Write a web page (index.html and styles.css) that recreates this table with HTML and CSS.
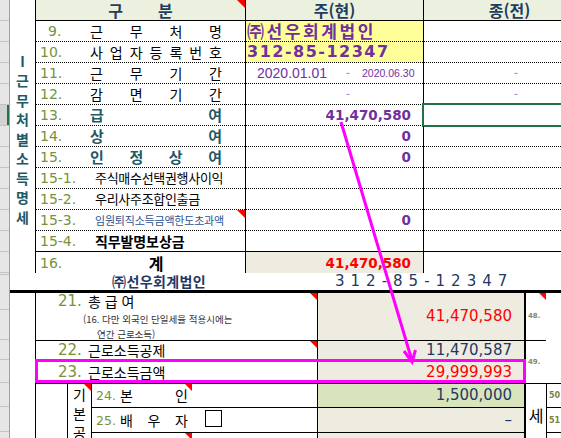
FILE: index.html
```html
<!DOCTYPE html>
<html lang="ko">
<head>
<meta charset="utf-8">
<title>근무처별소득명세</title>
<link rel="stylesheet" href="styles.css">
</head>
<body>
<div class="page">
  <div class="strip">
    <div class="sr"></div><div class="sr"></div><div class="sr"></div><div class="sr"></div><div class="sr"></div>
    <div class="sr sel"></div>
    <div class="sr"></div><div class="sr"></div><div class="sr"></div><div class="sr"></div><div class="sr"></div><div class="sr"></div><div class="sr"></div>
    <div class="sr s2"></div>
    <div class="sr s35"></div>
    <div class="sr s30"></div>
    <div class="sr s20"></div>
    <div class="sr s23"></div>
    <div class="sr s24"></div>
    <div class="sr s25"></div>
    <div class="sr s30"></div>
  </div>

  <div class="sheet">
    <div class="upper">
      <div class="title"><span>Ⅰ</span><span>근</span><span>무</span><span>처</span><span>별</span><span>소</span><span>득</span><span>명</span><span>세</span></div>

      <div class="cell hd"><span class="hsp"><span>구</span><span>분</span></span><i class="tri t8"></i></div>
      <div class="cell hd">주(현)</div>
      <div class="cell hd">종(전)</div>

      <div class="cell"><span class="n n9">9.</span><span class="lb"><span>근</span><span>무</span><span>처</span><span>명</span></span></div>
      <div class="cell yel"><span class="co">㈜선우회계법인</span></div>
      <div class="cell"></div>

      <div class="cell"><span class="n">10.</span><span class="lb"><span>사</span><span>업</span><span>자</span><span>등</span><span>록</span><span>번</span><span>호</span></span></div>
      <div class="cell yel"><span class="bn">312-85-12347</span></div>
      <div class="cell"></div>

      <div class="cell"><span class="n">11.</span><span class="lb"><span>근</span><span>무</span><span>기</span><span>간</span></span></div>
      <div class="cell"><span class="d1">2020.01.01</span><span class="tl">~</span><span class="d2">2020.06.30</span></div>
      <div class="cell"><span class="tl m90">~</span></div>

      <div class="cell"><span class="n">12.</span><span class="lb"><span>감</span><span>면</span><span>기</span><span>간</span></span></div>
      <div class="cell"><span class="tl m100">~</span></div>
      <div class="cell"><span class="tl m90">~</span></div>

      <div class="cell"><span class="n">13.</span><span class="lb t"><span>급</span><span>여</span></span></div>
      <div class="cell r"><span class="pv">41,470,580</span></div>
      <div class="cell"><i class="selbox"></i></div>

      <div class="cell"><span class="n">14.</span><span class="lb t"><span>상</span><span>여</span></span></div>
      <div class="cell r"><span class="pv">0</span></div>
      <div class="cell"></div>

      <div class="cell"><span class="n">15.</span><span class="lb t"><span>인</span><span>정</span><span>상</span><span>여</span></span></div>
      <div class="cell r"><span class="pv">0</span></div>
      <div class="cell"></div>

      <div class="cell"><span class="n w">15-1.</span><span class="l15">주식매수선택권행사이익</span></div>
      <div class="cell"></div>
      <div class="cell"></div>

      <div class="cell"><span class="n w">15-2.</span><span class="l15">우리사주조합인출금</span></div>
      <div class="cell"></div>
      <div class="cell"></div>

      <div class="cell"><span class="n w">15-3.</span><span class="l153">임원퇴직소득금액한도초과액</span><i class="tri t8"></i></div>
      <div class="cell r"><span class="pv">0</span></div>
      <div class="cell"></div>

      <div class="cell solid"><span class="n w">15-4.</span><span class="l154">직무발명보상금</span></div>
      <div class="cell solid"></div>
      <div class="cell solid"></div>

      <div class="cell last"><span class="n">16.</span><span class="lb c">계</span></div>
      <div class="cell last r beige"><span class="pv rd">41,470,580</span></div>
      <div class="cell last"></div>
    </div>

    <div class="company"><span class="cn">㈜선우회계법인</span><span class="cb">312-85-12347</span></div>

    <div class="lower">
      <div class="gap"></div>

      <div class="lc k2l r1 l21">
        <div class="l21a"><span class="n2">21.</span><span>총 급 여</span></div>
        <div class="sm sm1">(16. 다만 외국인 단일세율 적용시에는</div>
        <div class="sm sm2">연간 근로소득)</div>
        <i class="tri"></i>
      </div>
      <div class="lc k6 r1 lv rd">41,470,580</div>
      <div class="lc k7 r1 rt"><span>48.</span><i class="tri"></i></div>
      <div class="lc k8 r1 rx"></div>

      <div class="lc k2l r2 lrow"><span class="n2">22.</span><span>근로소득공제</span><i class="tri"></i></div>
      <div class="lc k6 r2 lv nv">11,470,587</div>
      <div class="lc k7 r2s rt"><span>49.</span></div>
      <div class="lc k8 r2s rx"></div>

      <div class="lc k2l r3 lrow"><span class="n2">23.</span><span>근로소득금액</span></div>
      <div class="lc k6 r3 lv rd">29,999,993</div>

      <div class="lc k2 r4s nb"></div>
      <div class="lc k3 r4s nb vt"><span>기</span><span>본</span><span>공</span><i class="tri"></i></div>
      <div class="lc k4 r4 c4"><span class="n3">24.</span><span class="lb3"><span>본</span><span>인</span></span><i class="tri"></i></div>
      <div class="lc k5 r4 c5"></div>
      <div class="lc k6 r4 lv nv gr">1,500,000</div>
      <div class="lc k7 r4s se">세</div>
      <div class="lc k8 r4 c8">50</div>

      <div class="lc k4 r5 c4"><span class="n3">25.</span><span class="lb3"><span>배</span><span>우</span><span>자</span></span></div>
      <div class="lc k5 r5 c5"><span class="chk"></span></div>
      <div class="lc k6 r5 lv nv">–</div>
      <div class="lc k8 r5 c8">51</div>

      <div class="lc k4 r6 c4"><i class="tri"></i></div>
      <div class="lc k5 r6 c5"></div>
      <div class="lc k6 r6 lv"></div>
      <div class="lc k8 r6 c8"></div>
    </div>
  </div>

  <svg class="ovl" width="561" height="438" viewBox="0 0 561 438" aria-hidden="true">
    <rect x="36.5" y="360.5" width="488" height="21" fill="none" stroke="#FF00FF" stroke-width="3"/>
    <line x1="341" y1="122" x2="411.5" y2="359" stroke="#FF00FF" stroke-width="3"/>
    <polyline points="404,351 412,362 415.5,350" fill="none" stroke="#FF00FF" stroke-width="3"/>
  </svg>
</div>
</body>
</html>
```

FILE: styles.css
```css
* { box-sizing: border-box; }
body { margin: 0; background: #fff; color: #000; font-family: "Noto Sans CJK KR", sans-serif; }

.page { position: relative; width: 561px; height: 438px; overflow: hidden; display: flex; align-items: flex-start; }

/* Excel row-header strip */
.strip { flex: none; width: 10px; height: 438px; background: #E6E6E6; border-right: 1px solid #A0A0A0; display: flex; flex-direction: column; }
.sr { flex: none; height: 21px; border-bottom: 1px solid #C4C4C4; }
.sr.sel { background: #D2D2D2; box-shadow: inset -2px 0 0 #217346; }
.sr.s2 { height: 2px; }
.sr.s35 { height: 35px; }
.sr.s30 { height: 30px; }
.sr.s20 { height: 20px; }
.sr.s23 { height: 23px; }
.sr.s24 { height: 24px; }
.sr.s25 { height: 25px; }

.sheet { flex: none; width: 600px; display: flex; flex-direction: column; }

/* upper table */
.upper { display: grid; grid-template-columns: 25px 210px 178px 172px; grid-template-rows: repeat(13, 21px); line-height: 16px; }
.title { grid-column: 1; grid-row: 1 / span 13; display: flex; flex-direction: column; align-items: center; justify-content: center; padding-top: 6px; color: #215967; font-weight: 700; font-size: 14px; line-height: 19.5px; }

.cell { position: relative; display: flex; align-items: center; white-space: nowrap; border-left: 1px solid #000; border-bottom: 1px dotted #000; }
.cell.hd { background: #EBF1DE; border-bottom: 1px solid #000; justify-content: center; font-weight: 700; font-size: 16px; color: #1F3D5C; padding-bottom: 1px; }
.cell.solid { border-bottom-style: solid; }
.cell.last { border-bottom: none; }
.cell.r { justify-content: flex-end; padding-right: 12px; }
.yel { background: #FFFF99; }
.beige { background: #EEECE1; }
.hsp { display: flex; gap: 35px; }

.n { flex: none; width: 54px; padding-left: 4px; font-family: "DejaVu Sans", sans-serif; font-size: 14px; color: #76923C; }
.n.n9 { padding-left: 12px; }
.n.w { width: 59px; }
.lb { flex: none; width: 132px; display: flex; justify-content: space-between; font-size: 14px; }
.lb.t { color: #215967; font-weight: 700; font-size: 15px; }
.lb.c { justify-content: center; font-weight: 700; font-size: 16px; }
.l15 { font-size: 13px; letter-spacing: -0.3px; }
.l153 { font-size: 11px; letter-spacing: -0.2px; color: #2A5291; }
.l154 { font-size: 14px; font-weight: 700; letter-spacing: -0.1px; }

.co { padding-left: 1px; color: #7030A0; font-weight: 700; font-size: 17px; letter-spacing: 2.6px; }
.bn { padding-left: 1px; color: #7030A0; font-weight: 700; font-family: "DejaVu Sans", sans-serif; font-size: 16px; letter-spacing: 1.5px; }
.d1 { flex: none; width: 89px; margin-left: 11px; font-family: "Liberation Sans", sans-serif; font-size: 14px; color: #7030A0; }
.d2 { font-family: "Liberation Sans", sans-serif; font-size: 10.5px; color: #7030A0; }
.tl { flex: none; width: 16px; font-size: 7px; color: #7030A0; }
.m90 { margin-left: 90px; }
.m100 { margin-left: 100px; }
.pv { font-family: "DejaVu Sans", sans-serif; font-weight: 700; font-size: 13.5px; color: #7030A0; }
.pv.rd, .rd { color: #FF0000; }

.tri { position: absolute; top: 0; right: 0; width: 0; height: 0; border-top: 7px solid #FF0000; border-left: 7px solid transparent; }
.tri.t8 { border-top-width: 8px; border-left-width: 8px; }
.selbox { position: absolute; left: -2px; top: -2px; right: 0; bottom: -2px; border: 2px solid #217346; }

/* company line */
.company { height: 17px; display: flex; align-items: center; white-space: nowrap; line-height: 15px; }
.cn { flex: none; width: 325px; padding-left: 102px; font-weight: 700; font-size: 14px; letter-spacing: 0.4px; color: #1F3864; }
.cb { font-family: "DejaVu Sans", sans-serif; font-size: 15px; letter-spacing: 6px; color: #1F3864; }

/* lower table */
.lower { border-top: 3px solid #000; display: grid; grid-template-columns: 25px 32px 24px 101px 125px 207px 22px 64px; grid-template-rows: 48px 20px 23px 24px 25px 30px; line-height: 17px; }
.gap { grid-column: 1; grid-row: 1 / span 6; }
.lc { position: relative; display: flex; align-items: center; white-space: nowrap; border-left: 1px solid #000; border-bottom: 1px solid #000; font-size: 14px; }
.k2 { grid-column: 2; }
.k2l { grid-column: 2 / 6; }
.k3 { grid-column: 3; }
.k4 { grid-column: 4; }
.k5 { grid-column: 5; }
.k6 { grid-column: 6; }
.k7 { grid-column: 7; }
.k8 { grid-column: 8; }
.r1 { grid-row: 1; }
.r2 { grid-row: 2; }
.r3 { grid-row: 3; }
.r4 { grid-row: 4; }
.r5 { grid-row: 5; }
.r6 { grid-row: 6; }
.r2s { grid-row: 2 / span 2; }
.r4s { grid-row: 4 / span 3; }

.l21 { flex-direction: column; align-items: flex-start; justify-content: flex-start; padding-left: 22px; }
.l21a { display: flex; align-items: center; height: 17px; }
.lrow { padding-left: 22px; }
.n2 { flex: none; width: 30px; font-family: "DejaVu Sans", sans-serif; font-size: 15px; color: #76923C; }
.sm { font-size: 9.5px; line-height: 15px; color: #333; }
.sm1 { margin-top: 2px; padding-left: 25px; }
.sm2 { padding-left: 39px; }

.lv { justify-content: flex-end; padding-right: 12px; background: #EEECE1; font-family: "DejaVu Sans", sans-serif; font-size: 15px; }
.lv.gr { background: #D8E4BC; }
.nv { color: #1F3864; }

.rt { border-left: 2px solid #000; padding-left: 2px; font-family: "DejaVu Sans", sans-serif; font-weight: 700; font-size: 7px; color: #8A8A5C; }
.rx { border-left: none; border-bottom: none; }
.r2s.rx { border-bottom: 1px solid #000; }

.nb { border-bottom: none; }
.vt { flex-direction: column; align-items: center; justify-content: flex-start; padding-top: 1px; line-height: 19px; }
.c4 { padding-left: 4px; }
.n3 { flex: none; width: 24px; font-family: "DejaVu Sans", sans-serif; font-size: 12.5px; color: #76923C; }
.lb3 { flex: none; width: 68px; display: flex; justify-content: space-between; }
.c5 { border-left: none; }
.chk { width: 17px; height: 17px; border: 1px solid #000; margin-left: 13px; align-self: flex-start; margin-top: 2px; }
.se { border-left: 2px solid #000; border-bottom: none; align-items: flex-start; justify-content: center; padding-top: 21px; font-size: 16px; line-height: 20px; }
.c8 { padding-left: 2px; font-family: "DejaVu Sans", sans-serif; font-weight: 700; font-size: 8px; color: #7F7F3F; }

.ovl { position: absolute; left: 0; top: 0; pointer-events: none; }
```
